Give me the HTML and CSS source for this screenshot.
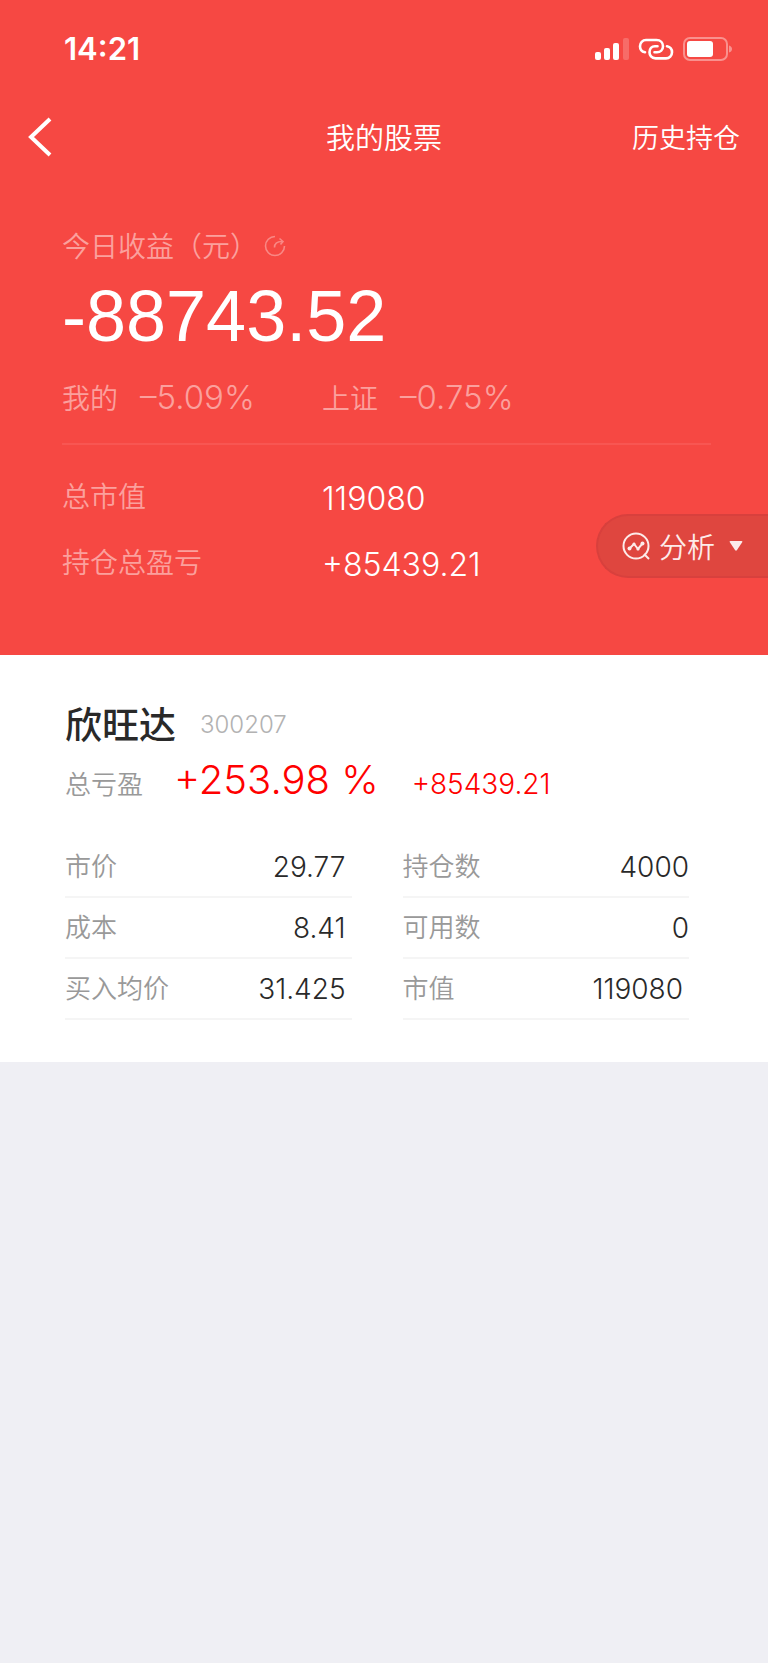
FILE: index.html
```html
<!DOCTYPE html>
<html lang="zh-CN">
<head>
<meta charset="utf-8">
<meta name="viewport" content="width=device-width, initial-scale=1">
<title>我的股票</title>
<link rel="stylesheet" href="styles.css">
</head>
<body>
<header class="hero">
  <div class="status">
    <time class="clock">14:21</time>
    <div class="status-icons">
      <svg width="34" height="24" viewBox="0 0 34 24" fill="#fff" aria-hidden="true">
        <rect x="0" y="15" width="6" height="8" rx="2"/>
        <rect x="9" y="11" width="6" height="12" rx="2"/>
        <rect x="18" y="6" width="6" height="17" rx="2"/>
        <rect x="28" y="1" width="6" height="22" rx="2" opacity=".2"/>
      </svg>
      <svg width="36" height="24" viewBox="0 0 36 24" fill="none" stroke="#fff" stroke-width="2.6" stroke-linecap="round" aria-hidden="true">
        <path d="M7 15.200C3.900 14.600 2 12 2 9.200C2 5.800 4.600 3 8 3H18.500C22.500 3 25 5.900 25 9.200C25 12.800 22.300 15.200 19 15.200H16.500"/>
        <path d="M29 9.200C32 9.800 34 12.300 34 15.200C34 18.600 31.400 21.400 28 21.400H17.500C13.500 21.400 11.500 18.300 11.500 15.200C11.500 11.800 13.700 9.200 17 9.200H19.500"/>
      </svg>
      <svg width="50" height="24" viewBox="0 0 50 24" aria-hidden="true">
        <rect x="1" y="1" width="43" height="22" rx="6" fill="none" stroke="#fff" stroke-width="2" opacity=".4"/>
        <rect x="4" y="4" width="26" height="16" rx="3" fill="#fff"/>
        <path d="M46 8.500Q49 9.500 49 12T46 15.500Z" fill="#fff" opacity=".4"/>
      </svg>
    </div>
  </div>
  <nav class="nav">
    <button class="back" type="button" aria-label="返回">
      <svg width="24" height="40" viewBox="0 0 24 40" fill="none" stroke="#fff" stroke-width="4" aria-hidden="true"><path d="M22 2L3 20L22 38"/></svg>
    </button>
    <h1 class="title">我的股票</h1>
    <a class="history" href="#history">历史持仓</a>
  </nav>
  <section class="summary">
    <div class="today">
      <span>今日收益（元）</span>
      <button class="refresh" type="button" aria-label="刷新">
        <svg width="22" height="22" viewBox="0 0 22 22" fill="none" stroke="#fff" stroke-width="1.600" aria-hidden="true">
          <path d="M11 1.500A9.500 9.500 0 1 0 20.500 11"/><path d="M10.500 12.500C10.500 8 13 6.500 18 6.500"/><path d="M15.500 3.500L19 6.500L16.500 9.500"/>
        </svg>
      </button>
    </div>
    <p class="profit">-88743.52</p>
    <div class="rates">
      <div class="rate"><span>我的</span><span class="rate-value">–5.09%</span></div>
      <div class="rate"><span>上证</span><span class="rate-value">–0.75%</span></div>
    </div>
    <dl class="totals">
      <dt>总市值</dt><dd>119080</dd>
      <dt>持仓总盈亏</dt><dd>+85439.21</dd>
    </dl>
  </section>
  <button class="analyse" type="button">
    <svg width="28" height="28" viewBox="0 0 28 28" fill="none" stroke="currentColor" stroke-width="2" aria-hidden="true">
      <circle cx="14" cy="14" r="12.500"/><path d="M22 22L27 27"/>
      <path d="M7.500 16.500L12 12L16 17L20.500 11.500"/>
      <g fill="currentColor" stroke="none"><circle cx="7.500" cy="16.500" r="2"/><circle cx="12" cy="12" r="1.600"/><circle cx="16" cy="17" r="1.600"/><circle cx="20.500" cy="11.500" r="2"/></g>
    </svg>
    <span>分析</span>
    <svg class="caret" width="14" height="10" viewBox="0 0 14 10" fill="currentColor" aria-hidden="true"><path d="M1.500 0H12.500Q14 0 13 1.500L8 9Q7 10.500 6 9L1 1.500Q0 0 1.500 0Z"/></svg>
  </button>
</header>
<main class="stock">
  <div class="stock-head">
    <h2 class="stock-name">欣旺达</h2>
    <span class="stock-code">300207</span>
  </div>
  <div class="gain">
    <span class="gain-label">总亏盈</span>
    <span class="gain-rate">+253.98 %</span>
    <span class="gain-amount">+85439.21</span>
  </div>
  <div class="details">
    <dl class="column inset">
      <div class="row"><dt>市价</dt><dd>29.77</dd></div>
      <div class="row"><dt>成本</dt><dd>8.41</dd></div>
      <div class="row"><dt>买入均价</dt><dd>31.425</dd></div>
    </dl>
    <dl class="column">
      <div class="row"><dt>持仓数</dt><dd>4000</dd></div>
      <div class="row"><dt>可用数</dt><dd>0</dd></div>
      <div class="row inset"><dt>市值</dt><dd>119080</dd></div>
    </dl>
  </div>
</main>
</body>
</html>
```
FILE: styles.css
```css
* { box-sizing: border-box; }
body {
  margin: 0;
  min-height: 100vh;
  background: #efeff4;
  font-family: Inter, "Noto Sans CJK SC", sans-serif;
  font-weight: 350;
}
h1, h2, p, dl, dd { margin: 0; font-weight: inherit; }
button { padding: 0; border: 0; background: none; color: inherit; font: inherit; }
svg { display: block; }

.hero { position: relative; background: #f64843; color: #fff; padding-bottom: 58px; }
.status { display: flex; justify-content: space-between; align-items: center; height: 98px; padding: 0 35px 0 64px; }
.clock { font-size: 31px; font-weight: 600; line-height: 40px; }
.status-icons { display: flex; gap: 9px; }

.nav { display: grid; grid-template-columns: 1fr auto 1fr; align-items: center; height: 78px; padding: 0 28px; }
.back { justify-self: start; }
.title { padding-top: 4px; font-size: 29px; line-height: 40px; }
.history { justify-self: end; padding-top: 4px; font-size: 27px; line-height: 40px; color: inherit; text-decoration: none; }

.summary { padding: 48px 57px 0 62px; }
.today { display: flex; align-items: center; gap: 6px; height: 42px; font-size: 28px; color: #fba09d; }
.refresh { padding-top: 2px; opacity: .35; }
.profit { font-family: "Liberation Sans", Arial, sans-serif; font-size: 72px; font-weight: 400; line-height: 100px; }
.rates { display: grid; grid-template-columns: 260px 1fr; align-items: center; height: 79px; padding-bottom: 16px; border-bottom: 2px solid #f85652; color: #fba09d; font-size: 28px; }
.rate { display: flex; align-items: baseline; gap: 22px; }
.rate-value { font-size: 33px; }
.totals { display: grid; grid-template-columns: 260px 1fr; padding-top: 20px; line-height: 66px; }
.totals dt { font-size: 28px; line-height: 64px; color: #fba09d; }
.totals dd { padding-top: 2px; font-size: 32px; line-height: 64px; }

.analyse {
  position: absolute; right: 0; bottom: 77px;
  display: flex; align-items: center; gap: 9px;
  height: 64px; padding: 0 25px 0 24px;
  border: 2px solid #d8403d; border-right: 0;
  border-radius: 32px 0 0 32px;
  background: #df463f; color: #fdebea; font-size: 28px;
}
.caret { margin-left: 5px; }

.stock { background: #fff; padding: 40px 79px 42px 65px; color: #292929; }
.stock-head { display: flex; align-items: center; gap: 24px; height: 56px; }
.stock-name { font-size: 37px; font-weight: 500; }
.stock-code { padding-top: 2px; font-size: 24px; color: #b2b2b2; }
.gain { display: flex; align-items: baseline; height: 60px; line-height: 58px; }
.gain-label { font-size: 26px; color: #999; }
.gain-rate { margin-left: 31px; font-size: 40px; color: #f00; }
.gain-amount { margin-left: 33px; font-size: 28px; color: #f00; }
.details { display: grid; grid-template-columns: 1fr 1fr; gap: 51px; padding-top: 26px; }
.row { display: flex; justify-content: space-between; align-items: center; height: 61px; border-bottom: 2px solid #f5f5f5; }
.row dt { padding-bottom: 5px; font-size: 26px; color: #999; }
.row dd { font-size: 28px; }
.inset dd { padding-right: 6px; }
```
